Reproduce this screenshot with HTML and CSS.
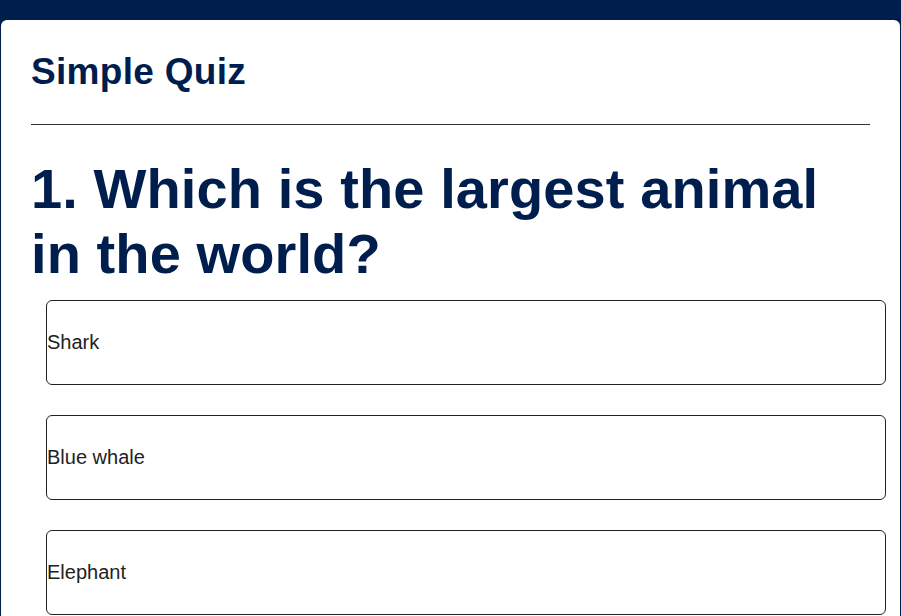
FILE: index.html
```html
<!DOCTYPE html>
<html>
<head>
<meta charset="utf-8">
<link rel="stylesheet" href="styles.css">
</head>
<body>
<div class="app">
  <h1 class="title">Simple Quiz</h1>
  <hr class="rule">
  <div class="quiz">
    <h2 class="question">1. Which is the largest animal in the world?</h2>
    <div class="answers">
      <button class="answer">Shark</button>
      <button class="answer">Blue whale</button>
      <button class="answer">Elephant</button>
    </div>
  </div>
</div>
</body>
</html>
```
FILE: styles.css
```css
html, body {
  margin: 0;
  padding: 0;
  height: 100%;
  overflow: hidden;
}
body {
  background: #001e4d;
  font-family: "Liberation Sans", Arial, sans-serif;
}
.app {
  background: #fff;
  margin: 20px 1px 0 1px;
  border-radius: 6px;
  padding: 30px 30px 30px 30px;
  min-height: 700px;
}
.title {
  margin: 0;
  font-size: 37px;
  letter-spacing: 0.3px;
  line-height: 43px;
  font-weight: bold;
  color: #001e4d;
}
.rule {
  margin: 31px 0 0 0;
  border: 0;
  border-top: 1px solid #333;
  height: 0;
}
.question {
  margin: 31px 0 14px 0;
  font-size: 56px;
  letter-spacing: 0.1px;
  line-height: 65px;
  font-weight: bold;
  color: #001e4d;
}
.answers {
  display: flex;
  flex-direction: column;
  gap: 30px;
}
.answer {
  display: flex;
  align-items: center;
  box-sizing: border-box;
  width: 840px;
  height: 85px;
  margin-left: 15px;
  padding: 0;
  background: #fff;
  border: 1px solid #222;
  border-radius: 6px;
  font-family: "Liberation Sans", Arial, sans-serif;
  font-size: 20px;
  color: #222;
  text-align: left;
}
```
